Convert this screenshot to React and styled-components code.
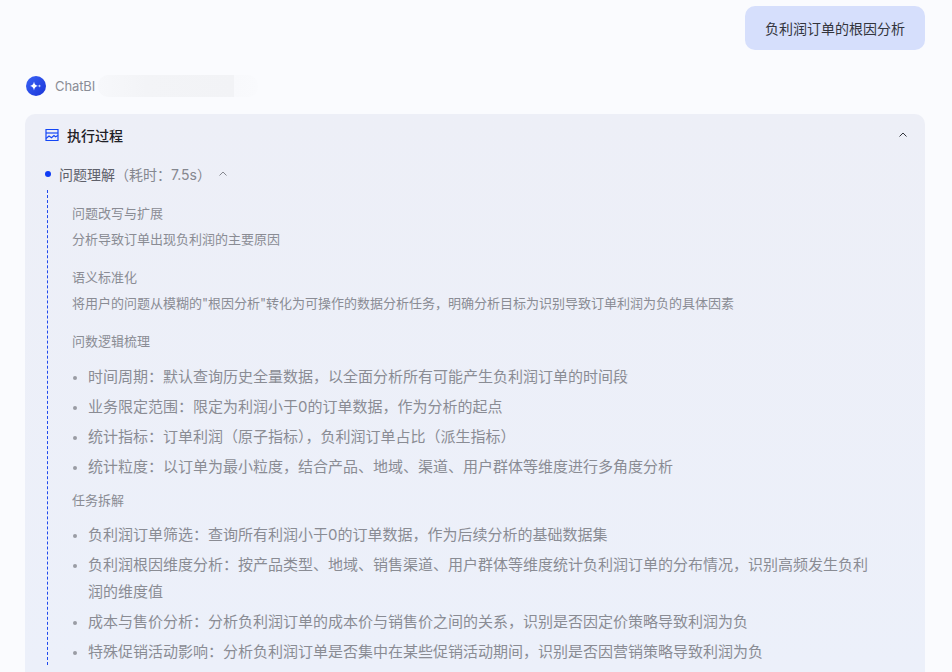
import React from 'react';
import styled, { createGlobalStyle } from 'styled-components';

const GlobalStyle = createGlobalStyle`
  html, body {
    margin: 0;
    width: 100%;
    height: 100%;
    overflow: hidden;
    background: #fafbfe;
    font-family: Inter, "Noto Sans CJK SC", sans-serif;
  }
`;

const Page = styled.div`
  width: 952px;
  height: 672px;
  overflow: hidden;
  padding: 6px 27px 0 25px;
  box-sizing: border-box;
  display: flex;
  flex-direction: column;
`;

const Bubble = styled.div`
  align-self: flex-end;
  height: 44px;
  padding: 0 20px;
  display: flex;
  align-items: center;
  background: #d6dffc;
  border-radius: 10px;
  color: #33353d;
  font-size: 14px;
`;

const BotRow = styled.div`
  display: flex;
  align-items: center;
  margin-top: 24px;
  height: 24px;
  padding-left: 1px;
`;

const BotName = styled.span`
  margin-left: 9px;
  color: #8b8d96;
  font-size: 13px;
  letter-spacing: -0.1px;
`;

const BlurPill = styled.div`
  width: 160px;
  height: 22px;
  margin-left: 3px;
  border-radius: 10px;
  background: linear-gradient(90deg, #f7f8fb 0%, #f3f4f7 30%, #f2f3f6 85%, #f8f9fc 85%, #f9fafd 100%);
`;

const Card = styled.div`
  margin-top: 16px;
  flex: 1;
  background: linear-gradient(180deg, #edeff7 0%, #ecf0fa 100%);
  border-radius: 10px 10px 0 0;
  padding: 0 16px 0 20px;
`;

const CardHeader = styled.div`
  height: 42px;
  display: flex;
  align-items: center;
  color: #1f2026;
  font-size: 14px;
  font-weight: 500;
  gap: 8px;
  margin-bottom: 2px;
`;

const Toggle = styled.span`
  margin-left: auto;
  display: flex;
`;

const StepHead = styled.div`
  height: 32px;
  display: flex;
  align-items: center;
  font-size: 14px;
  color: #5f616b;
`;

const Dot = styled.i`
  width: 6px;
  height: 6px;
  border-radius: 50%;
  background: #0f3cf5;
  margin-right: 8px;
`;

const StepTime = styled.span`
  color: #85878f;
`;

const StepToggle = styled.span`
  display: flex;
  margin-left: 6px;
`;

const StepBody = styled.div`
  margin-left: 2px;
  padding: 10px 0 0 24px;
  border-left: 1px dashed #1f49ee;
  color: #8a8c94;
`;

const Heading = styled.div`
  font-size: 13px;
  line-height: 26px;
`;

const Para = styled.div`
  font-size: 13px;
  line-height: 26px;
  margin-bottom: 12px;
`;

const List = styled.ul`
  margin: ${props => props.$top}px 0 7px;
  padding: 0 36px 0 16px;
  list-style: disc;
`;

const Item = styled.li`
  font-size: 15px;
  line-height: 27px;
  margin-bottom: 3px;
  &::marker {
    color: #9a9ca4;
    font-size: 12px;
  }
`;

const Chevron = ({ color, size = 12 }) => (
  <svg width={size} height={size} viewBox="0 0 12 12" fill="none">
    <path d="M2.500 7.500 6 4l3.500 3.500" stroke={color} strokeWidth="1" />
  </svg>
);

const BotLogo = () => (
  <svg width="20" height="20" viewBox="0 0 20 20">
    <defs>
      <linearGradient id="logo" x1="0" y1="0" x2="1" y2="1">
        <stop offset="0" stopColor="#3a63f5" />
        <stop offset="1" stopColor="#1a35d8" />
      </linearGradient>
    </defs>
    <circle cx="10" cy="10" r="10" fill="url(#logo)" />
    <path d="M8 5.600c.4 2.700 1.400 3.800 3.900 4.400-2.500.6-3.500 1.700-3.900 4.400-.4-2.700-1.400-3.800-3.900-4.400C6.600 9.400 7.600 8.300 8 5.600Z" fill="#fff" />
    <path d="M13.500 8.300c.2 1 .6 1.400 1.700 1.700-1.100.3-1.500.7-1.700 1.700-.2-1-.6-1.400-1.700-1.700 1.100-.3 1.500-.7 1.700-1.700Z" fill="#c9d4ff" />
  </svg>
);

const ProcessIcon = () => (
  <svg width="14" height="14" viewBox="0 0 14 14" fill="none" stroke="#1446f5" strokeWidth="1.2">
    <path d="M1 1.500h12v11H1z" />
    <path d="M1 5h12" />
    <path d="M1 10.500 4 8l2.500 1.800L9 7.500l1.500 1.200L13 7.500" />
  </svg>
);

const logicItems = [
  '时间周期：默认查询历史全量数据，以全面分析所有可能产生负利润订单的时间段',
  '业务限定范围：限定为利润小于0的订单数据，作为分析的起点',
  '统计指标：订单利润（原子指标），负利润订单占比（派生指标）',
  '统计粒度：以订单为最小粒度，结合产品、地域、渠道、用户群体等维度进行多角度分析',
];

const taskItems = [
  '负利润订单筛选：查询所有利润小于0的订单数据，作为后续分析的基础数据集',
  '负利润根因维度分析：按产品类型、地域、销售渠道、用户群体等维度统计负利润订单的分布情况，识别高频发生负利润的维度值',
  '成本与售价分析：分析负利润订单的成本价与销售价之间的关系，识别是否因定价策略导致利润为负',
  '特殊促销活动影响：分析负利润订单是否集中在某些促销活动期间，识别是否因营销策略导致利润为负',
];

export default function App() {
  return (
    <>
      <GlobalStyle />
      <Page>
        <Bubble>负利润订单的根因分析</Bubble>
        <BotRow>
          <BotLogo />
          <BotName>ChatBI</BotName>
          <BlurPill />
        </BotRow>
        <Card>
          <CardHeader>
            <ProcessIcon />
            执行过程
            <Toggle><Chevron color="#33353d" /></Toggle>
          </CardHeader>
          <StepHead>
            <Dot />
            问题理解<StepTime>（耗时：7.5s）</StepTime>
            <StepToggle><Chevron color="#85878f" /></StepToggle>
          </StepHead>
          <StepBody>
            <Heading>问题改写与扩展</Heading>
            <Para>分析导致订单出现负利润的主要原因</Para>
            <Heading>语义标准化</Heading>
            <Para>将用户的问题从模糊的"根因分析"转化为可操作的数据分析任务，明确分析目标为识别导致订单利润为负的具体因素</Para>
            <Heading>问数逻辑梳理</Heading>
            <List $top={9}>
              {logicItems.map(t => <Item key={t}>{t}</Item>)}
            </List>
            <Heading>任务拆解</Heading>
            <List $top={8}>
              {taskItems.map(t => <Item key={t}>{t}</Item>)}
            </List>
          </StepBody>
        </Card>
      </Page>
    </>
  );
}
